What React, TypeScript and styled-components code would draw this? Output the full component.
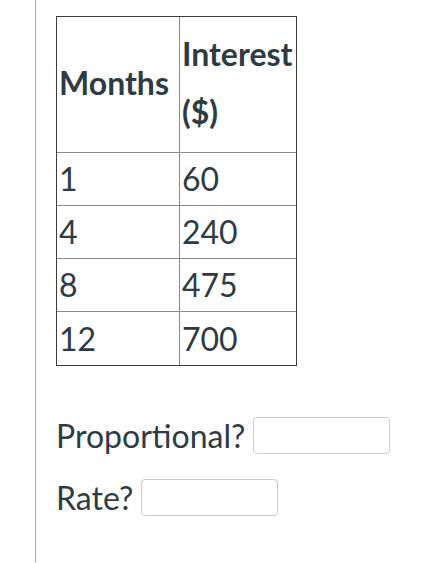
import styled, { createGlobalStyle } from "styled-components";

const GlobalStyle = createGlobalStyle`
  html, body { margin: 0; padding: 0; background: #ffffff; }
  body {
    font-family: Lato, "Open Sans", sans-serif;
    color: #2d3b45;
  }
`;

const rows: [string, string][] = [
  ["1", "60"],
  ["4", "240"],
  ["8", "475"],
  ["12", "700"],
];

export default function App() {
  return (
    <Page>
      <GlobalStyle />
      <Content>
        <DataTable>
          <colgroup>
            <col style={{ width: 123 }} />
            <col style={{ width: 116 }} />
          </colgroup>
          <thead>
            <tr>
              <HeadCell>Months</HeadCell>
              <HeadCell>
                Interest
                <br />
                ($)
              </HeadCell>
            </tr>
          </thead>
          <tbody>
            {rows.map(([m, i]) => (
              <tr key={m}>
                <Cell>{m}</Cell>
                <Cell>{i}</Cell>
              </tr>
            ))}
          </tbody>
        </DataTable>

        <Questions>
          <Question>
            <span>Proportional?</span>
            <AnswerBox type="text" aria-label="Proportional?" />
          </Question>
          <Question>
            <span>Rate?</span>
            <AnswerBox type="text" aria-label="Rate?" />
          </Question>
        </Questions>
      </Content>
    </Page>
  );
}

const Page = styled.div`
  height: 563px;
  padding-left: 35px;
  box-sizing: border-box;
`;

const Content = styled.main`
  height: 562px;
  border-left: 1px solid #a8a8a8;
  padding: 16px 0 0 20px;
  box-sizing: border-box;
`;

const DataTable = styled.table`
  width: 241px;
  table-layout: fixed;
  border-collapse: separate;
  border-spacing: 0;
  border: 1px solid #3b3b3b;
  font-size: 32px;

  tr:last-child td {
    border-bottom: none;
  }
  th:last-child,
  td:last-child {
    border-right: none;
  }
`;

const HeadCell = styled.th`
  height: 136px;
  padding: 6px 2px 10px;
  box-sizing: border-box;
  text-align: left;
  vertical-align: middle;
  font-weight: 700;
  line-height: 58px;
  white-space: nowrap;
  border-right: 1px solid #8a8a8a;
  border-bottom: 1px solid #8a8a8a;
`;

const Cell = styled.td`
  height: 53px;
  padding: 0 2px;
  box-sizing: border-box;
  line-height: 52px;
  border-right: 1px solid #8a8a8a;
  border-bottom: 1px solid #8a8a8a;
`;

const Questions = styled.section`
  display: flex;
  flex-direction: column;
  gap: 23px;
  margin-top: 50px;
  font-size: 32px;
`;

const Question = styled.div`
  display: flex;
  align-items: center;
  gap: 8px;
`;

const AnswerBox = styled.input`
  width: 137px;
  height: 37px;
  box-sizing: border-box;
  border: 1px solid #c7cdd1;
  border-radius: 4px;
  background: #ffffff;
  outline: none;
`;
